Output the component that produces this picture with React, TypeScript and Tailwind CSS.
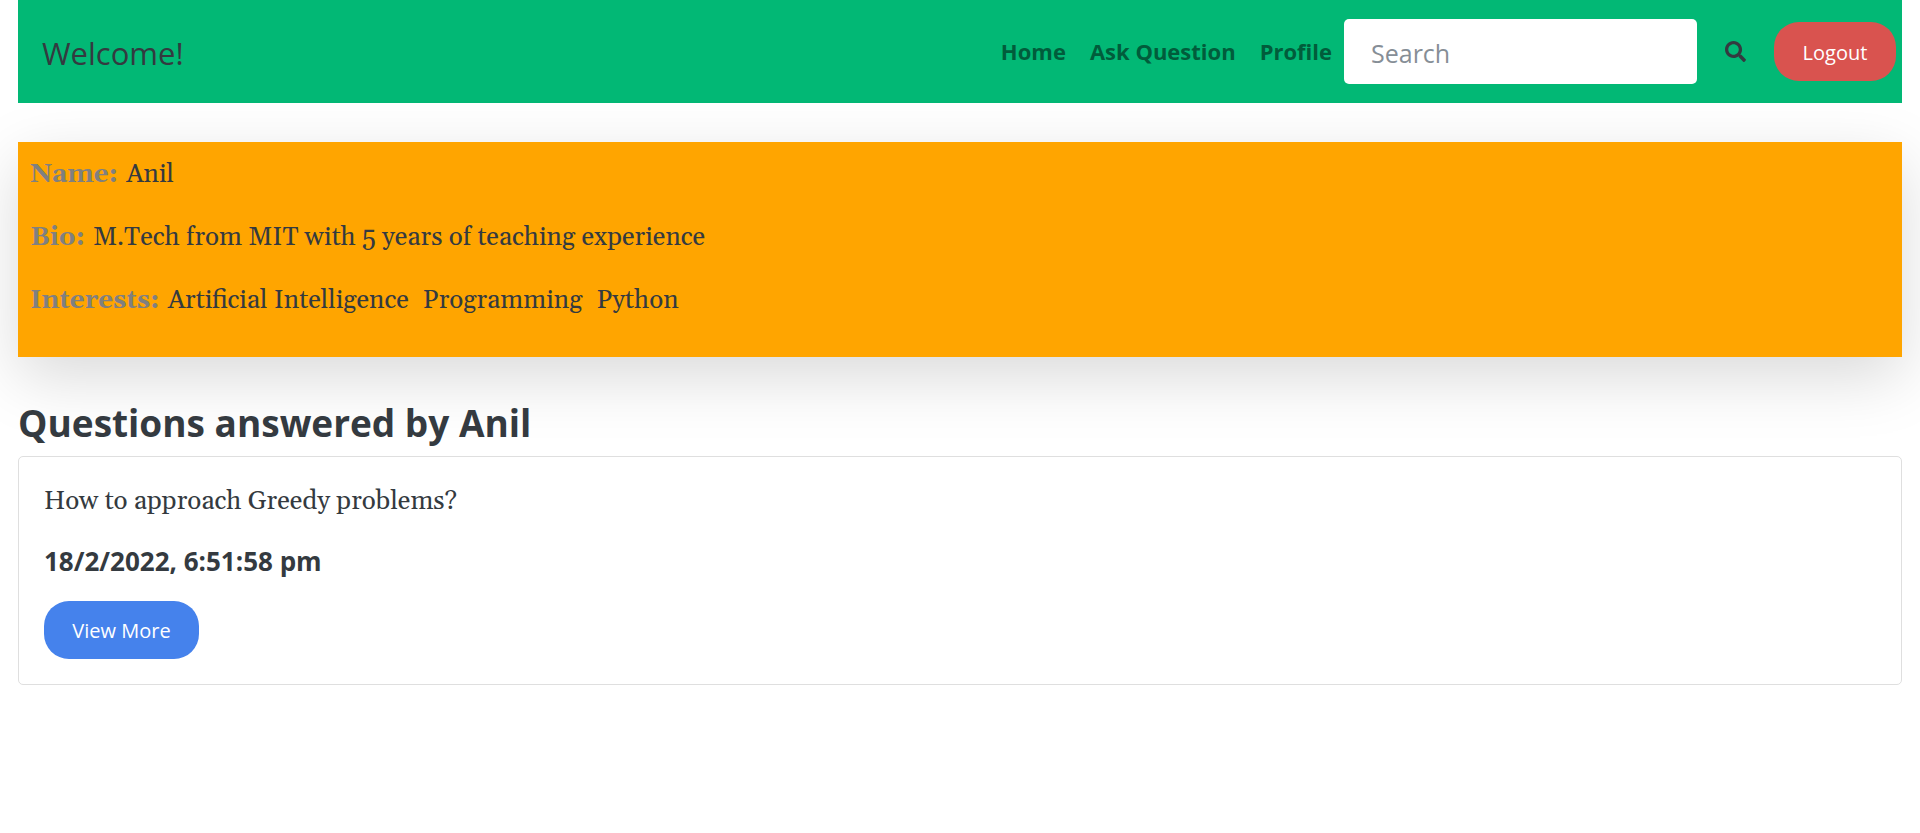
import { FaSearch } from "react-icons/fa";

const navLinks = ["Home", "Ask Question", "Profile"];

const profile = [
  { label: "Name:", values: ["Anil"] },
  { label: "Bio:", values: ["M.Tech from MIT with 5 years of teaching experience"] },
  { label: "Interests:", values: ["Artificial Intelligence", "Programming", "Python"] },
];

const serif = "font-[Georgia,Gelasio,'Liberation_Serif',serif]";

export default function App() {
  return (
    <div className="min-h-screen bg-white px-[18px] font-['Segoe_UI','Open_Sans','Noto_Sans',sans-serif] text-[#343a40]">
      <nav className="flex items-center justify-between bg-[#02b875] py-[19px] pr-1.5 pl-6">
        <a href="#" className="pt-0.5 text-[31px] leading-[48px]">
          Welcome!
        </a>
        <div className="flex items-center">
          <ul className="flex gap-6 pr-3 pb-0.5 text-[22px] leading-8 font-bold text-[#015c3b]">
            {navLinks.map((name) => (
              <li key={name}>
                <a href="#">{name}</a>
              </li>
            ))}
          </ul>
          <form className="flex items-center">
            <input
              type="search"
              aria-label="Search"
              placeholder="Search"
              className="h-[65px] w-[353px] rounded-[5px] bg-white px-[27px] pt-0.5 text-[25px] placeholder:text-[#868e96]"
            />
            <button type="button" aria-label="Submit search" className="flex h-[58px] w-[77px] items-center justify-center">
              <FaSearch className="size-[21px]" />
            </button>
          </form>
          <button type="button" className="h-[59px] w-[122px] rounded-[25px] bg-[#d9534f] pt-0.5 text-[20px] text-white">
            Logout
          </button>
        </div>
      </nav>

      <main>
        <section className={`${serif} mt-[39px] bg-[orange] px-3 pt-[13px] pb-9 text-[26px] leading-10 shadow-[0_20px_60px_rgba(0,0,0,0.15)]`}>
          <div className="flex flex-col gap-[23px]">
            {profile.map(({ label, values }) => (
              <p key={label} className="flex gap-2">
                <span className="font-bold text-[gray]">{label}</span>
                <span className="flex gap-3.5">
                  {values.map((value) => (
                    <span key={value}>{value}</span>
                  ))}
                </span>
              </p>
            ))}
          </div>
        </section>

        <h1 className="mt-[43px] text-[37px] leading-[46px] font-bold">Questions answered by Anil</h1>

        <article className="mt-2.5 rounded-[5px] border border-[#dfdfdf] p-[25px]">
          <p className={`${serif} text-[26px] leading-10`}>How to approach Greedy problems?</p>
          <p className="mt-[23px] text-[26px] leading-8 font-bold">18/2/2022, 6:51:58 pm</p>
          <button type="button" className="mt-6 h-[58px] w-[155px] rounded-[25px] bg-[#4582ec] pt-0.5 text-[20px] text-white">
            View More
          </button>
        </article>
      </main>
    </div>
  );
}
